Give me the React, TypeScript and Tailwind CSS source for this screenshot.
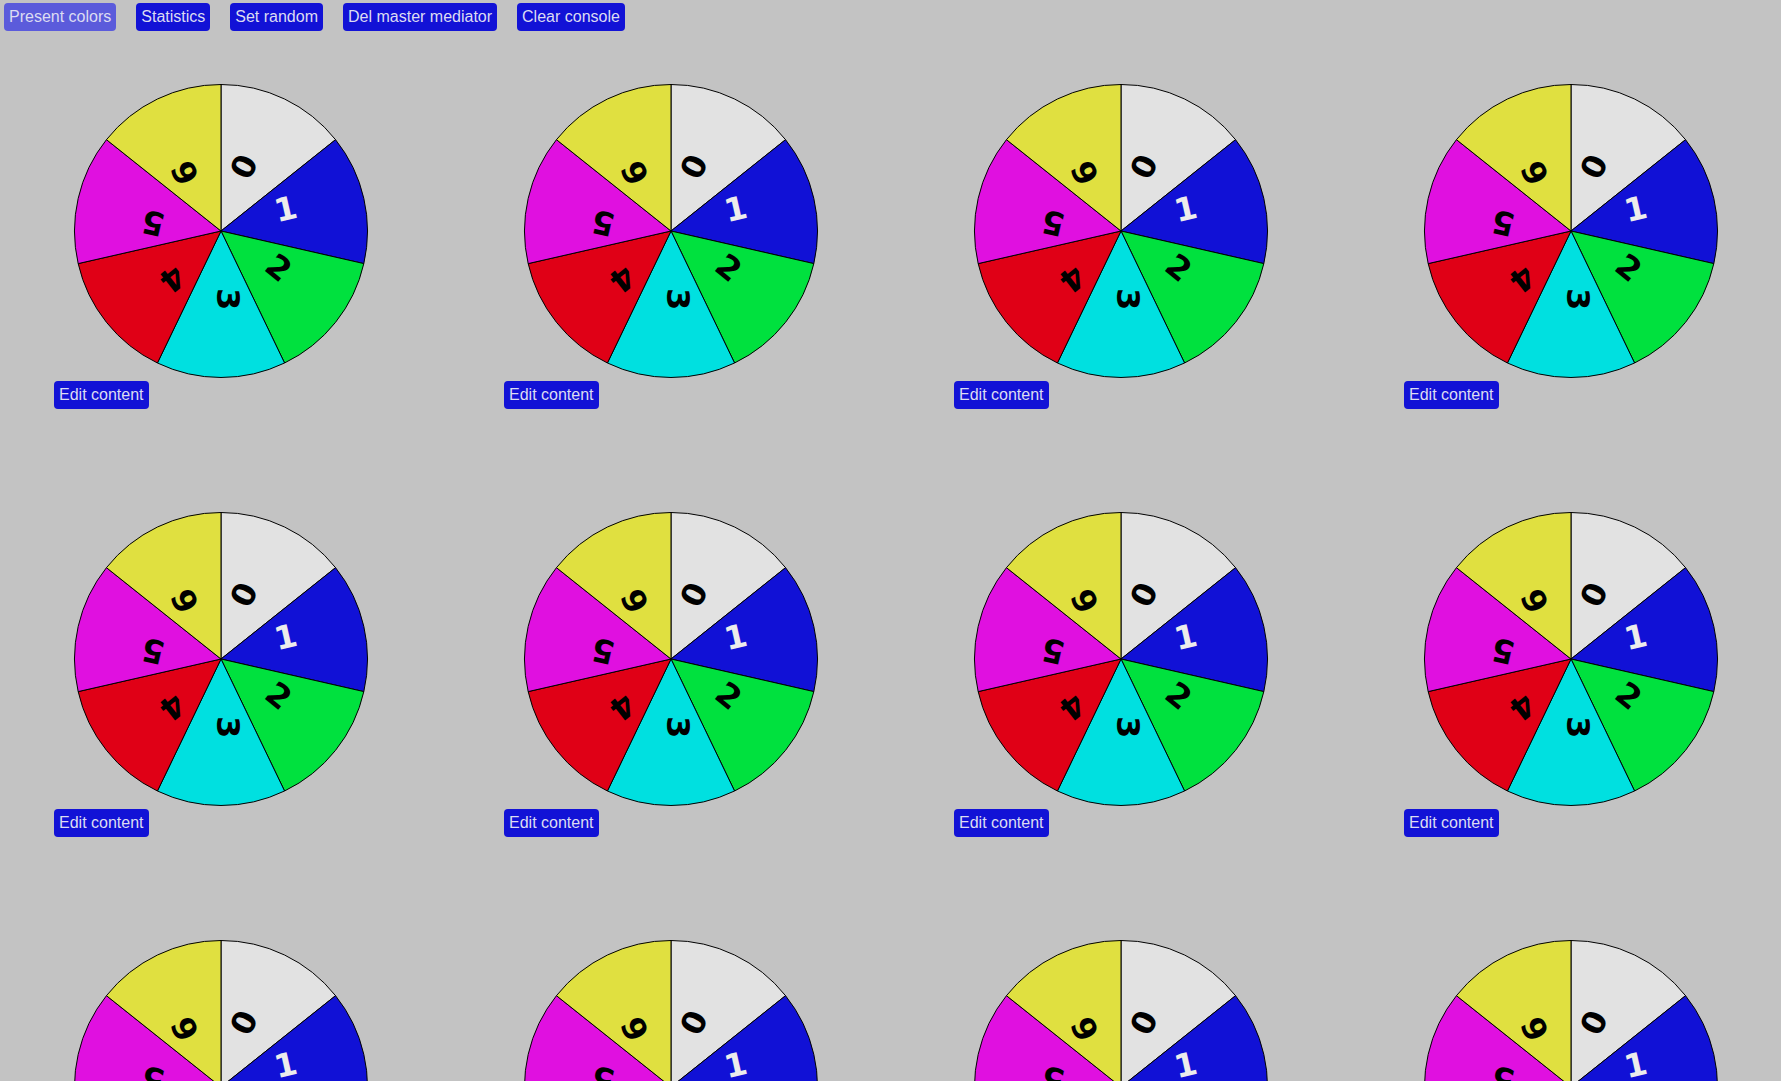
import React from "react";

const SEGMENTS = [
  { label: "0", fill: "#e2e2e2", text: "#000000" },
  { label: "1", fill: "#1111d6", text: "#ececec" },
  { label: "2", fill: "#00e13e", text: "#000000" },
  { label: "3", fill: "#00e0e0", text: "#000000" },
  { label: "4", fill: "#e00016", text: "#000000" },
  { label: "5", fill: "#e010e0", text: "#000000" },
  { label: "6", fill: "#e0e040", text: "#000000" },
];

const TOOLBAR = ["Present colors", "Statistics", "Set random", "Del master mediator", "Clear console"];

function Wheel() {
  const cx = 150;
  const cy = 150;
  const r = 146.5;
  const step = (Math.PI * 2) / SEGMENTS.length;
  const pt = (a: number) => `${cx + r * Math.sin(a)} ${cy - r * Math.cos(a)}`;

  return (
    <svg width="300" height="300" viewBox="0 0 300 300" className="block">
      {SEGMENTS.map((s, i) => (
        <path
          key={s.label}
          d={`M ${cx} ${cy} L ${pt(i * step)} A ${r} ${r} 0 0 1 ${pt((i + 1) * step)} Z`}
          fill={s.fill}
          stroke="#000"
          strokeWidth="1"
        />
      ))}
      {SEGMENTS.map((s, i) => {
        const deg = ((i + 0.5) * 360) / SEGMENTS.length - 90;
        return (
          <text
            key={`t${s.label}`}
            transform={`translate(${cx} ${cy}) rotate(${deg}) translate(68 -7)`}
            textAnchor="middle"
            dominantBaseline="central"
            fontSize="32"
            fontWeight="bold"
            fontFamily="'DejaVu Sans', sans-serif"
            fill={s.text}
          >
            {s.label}
          </text>
        );
      })}
    </svg>
  );
}

export default function App() {
  return (
    <div className="min-h-screen bg-[#c3c3c3] font-['Liberation_Sans',Arial,sans-serif] text-[16px]">
      <div className="flex gap-[20px] pl-[4px] pt-[3px]">
        {TOOLBAR.map((label, i) => (
          <button
            key={label}
            className={`h-[28px] rounded-[4px] px-[5px] leading-[20px] text-[#dcdcf2] ${
              i === 0 ? "bg-[#5b5bdb]" : "bg-[#1212d6]"
            }`}
          >
            {label}
          </button>
        ))}
      </div>

      <div className="grid grid-cols-[repeat(4,450px)] gap-y-[100px] pl-[54px] pt-[50px]">
        {Array.from({ length: 12 }).map((_, i) => (
          <div key={i} className="flex flex-col items-start">
            <div className="ml-[17px]">
              <Wheel />
            </div>
            <button className="h-[28px] rounded-[4px] bg-[#1212d6] px-[5px] leading-[20px] text-[#dcdcf2]">
              Edit content
            </button>
          </div>
        ))}
      </div>
    </div>
  );
}
